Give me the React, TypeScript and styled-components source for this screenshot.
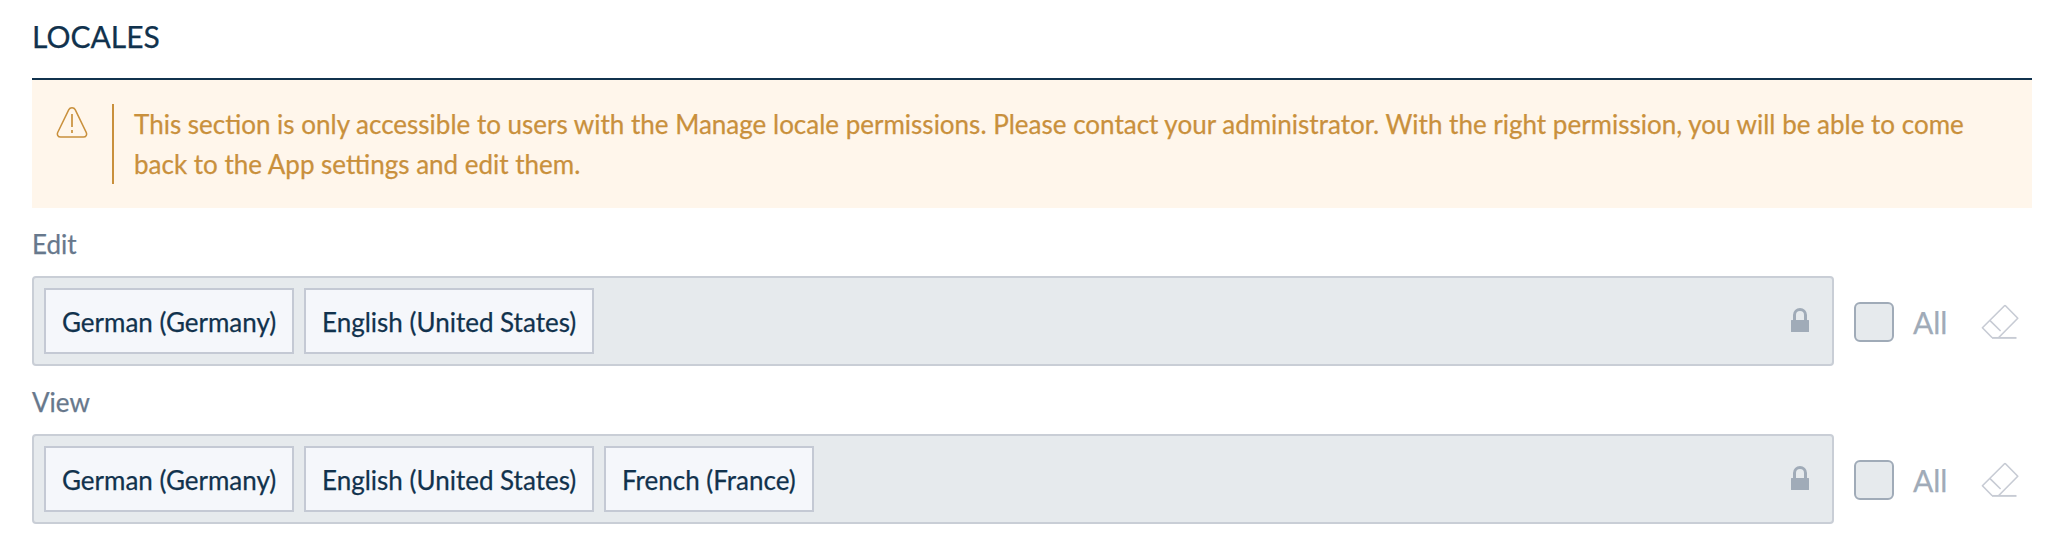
import React from "react";
import styled, { createGlobalStyle } from "styled-components";

const GlobalStyle = createGlobalStyle`
  * { box-sizing: border-box; }
  body {
    margin: 0;
    background: #ffffff;
    font-family: Lato, "Liberation Sans", sans-serif;
    font-size: 26px;
    line-height: 40px;
    color: #11324d;
    -webkit-text-stroke: 0.25px currentColor;
  }
`;

const Section = styled.section`
  width: 2052px;
  padding: 16px 20px 22px 32px;
`;

const Title = styled.h2`
  margin: 0;
  height: 64px;
  border-bottom: 2px solid #11324d;
  font-size: 30px;
  font-weight: 400;
  line-height: 40px;
`;

const Alert = styled.div`
  display: flex;
  align-items: flex-start;
  padding: 24px;
  background: #fff6eb;
  color: #c9903c;
`;

const AlertIcon = styled.svg`
  flex: none;
  width: 32px;
  height: 32px;
  margin: 3px 24px 0 0;
`;

const AlertText = styled.p`
  flex: 1;
  margin: 0;
  padding-left: 20px;
  border-left: 2px solid #c9903c;
`;

const Field = styled.div`
  padding-top: 16px;
`;

const Label = styled.div`
  height: 52px;
  color: #67788c;
`;

const Row = styled.div`
  display: flex;
  align-items: center;
`;

const Select = styled.div`
  display: flex;
  align-items: center;
  gap: 10px;
  width: 1802px;
  height: 90px;
  padding: 0 24px 0 10px;
  background: #e6eaed;
  border: 2px solid #c9ced6;
  border-radius: 4px;
`;

const Chip = styled.span<{ $width: number }>`
  width: ${(p) => p.$width}px;
  height: 66px;
  padding: 12px 0 0 16px;
  background: #f5f7fb;
  border: 2px solid #c4c9d4;
  white-space: nowrap;
`;

const Lock = styled.svg`
  width: 18px;
  height: 24px;
  margin: 0 -1px 2px auto;
`;

const Checkbox = styled.span`
  width: 40px;
  height: 40px;
  margin: 2px 19px 0 20px;
  background: #e6eaed;
  border: 2px solid #a0abb8;
  border-radius: 6px;
`;

const AllLabel = styled.span`
  width: 67px;
  padding-top: 2px;
  font-size: 30px;
  color: #a0abb8;
`;

const Eraser = styled.svg`
  width: 40px;
  height: 40px;
`;

const locales = [
  { name: "German (Germany)", width: 250 },
  { name: "English (United States)", width: 290 },
  { name: "French (France)", width: 210 },
];

function LocaleField({ label, count }: { label: string; count: number }) {
  return (
    <Field>
      <Label>{label}</Label>
      <Row>
        <Select>
          {locales.slice(0, count).map((l) => (
            <Chip key={l.name} $width={l.width}>
              {l.name}
            </Chip>
          ))}
          <Lock viewBox="0 0 18 24" fill="#a0abb8">
            <path d="M0 12.5a.5.5 0 0 1 .5-.5H2V7a7 7 0 0 1 14 0v5h1.5a.5.5 0 0 1 .5.5v11a.5.5 0 0 1-.5.5H.5a.5.5 0 0 1-.5-.5zM5 12h8V7a4 4 0 0 0-8 0z" />
          </Lock>
        </Select>
        <Checkbox />
        <AllLabel>All</AllLabel>
        <Eraser viewBox="0 0 40 40" fill="none" stroke="#c7cbd4" strokeWidth="1.6">
          <path d="M25 4.2 37.8 17.2 18.5 36.8M25 4.2 2.4 26.8 12.2 36.8M9.8 19.4 20.6 30" strokeLinejoin="round" />
          <path d="M12 36.9H36.5" strokeWidth="1.9" />
        </Eraser>
      </Row>
    </Field>
  );
}

export default function App() {
  return (
    <>
      <GlobalStyle />
      <Section>
        <Title>LOCALES</Title>
        <Alert>
          <AlertIcon viewBox="0 0 32 32" fill="none" stroke="#c9903c" strokeWidth="1.5">
            <path d="M12.8 2.7a3.6 3.6 0 0 1 6.4 0L30.2 25.3c1.1 2.3-.1 4.7-2.8 4.7H4.6c-2.7 0-3.9-2.4-2.8-4.7z" />
            <path d="M16 7v13M16 23v3" strokeWidth="1.7" />
          </AlertIcon>
          <AlertText>
            This section is only accessible to users with the Manage locale permissions. Please
            contact your administrator. With the right permission, you will be able to come back to
            the App settings and edit them.
          </AlertText>
        </Alert>
        <LocaleField label="Edit" count={2} />
        <LocaleField label="View" count={3} />
      </Section>
    </>
  );
}
